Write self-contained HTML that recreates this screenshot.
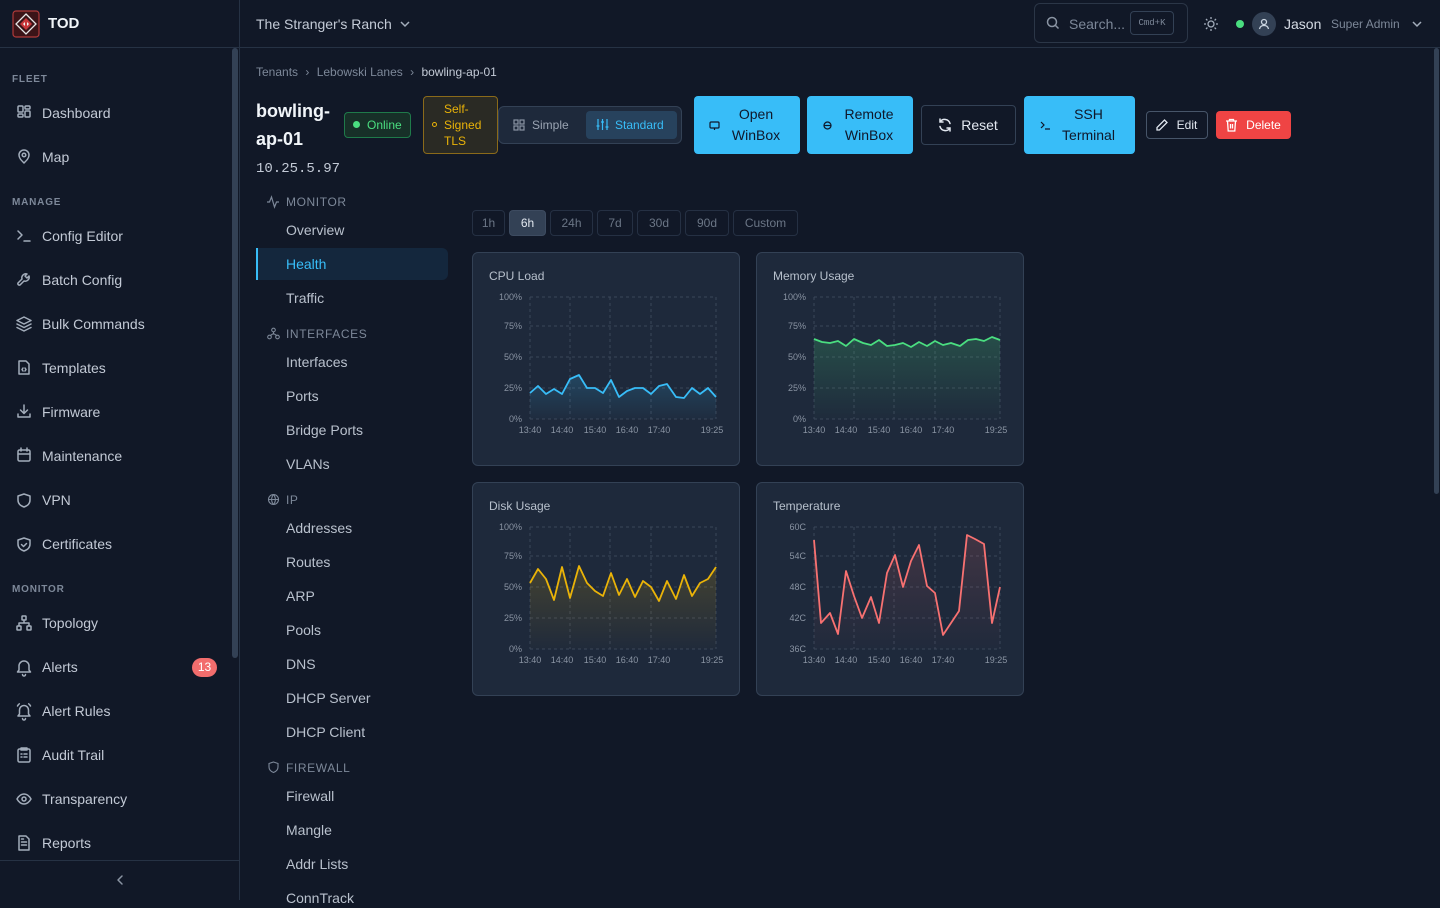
<!DOCTYPE html>
<html><head><meta charset="utf-8"><style>
*{box-sizing:border-box;margin:0;padding:0}
body{width:1440px;height:900px;overflow:hidden;background:#111827;font-family:"Liberation Sans",sans-serif;color:#cbd5e1;position:relative}
.a{position:absolute;white-space:nowrap}
.t{line-height:20px;font-size:14px;color:#c3cad6}
.sec{font-size:10px;font-weight:bold;letter-spacing:.8px;color:#7d8899;line-height:12px}
.sub{font-size:14px;color:#b9c1cd;line-height:20px}
.subh{font-size:12px;letter-spacing:.6px;color:#7d8899;line-height:14px}
.btn{position:absolute;border-radius:4px;font-size:14px;display:flex;align-items:center;justify-content:center;text-align:center;line-height:21px}
.blue{background:#38bdf8;color:#0f172a}
.card{position:absolute;width:268px;height:214px;background:#1e293b;border:1px solid #334155;border-radius:6px}
.card .ttl{position:absolute;left:16px;top:16px;font-size:12px;color:#b7c0cc}
.card svg{position:absolute;left:0;top:0}
.tr{position:absolute;top:210px;height:26px;border:1px solid #253043;border-radius:4px;font-size:12px;color:#6b7686;line-height:24px;text-align:center}
</style></head><body>

<div class="a" style="left:0;top:0;width:240px;height:900px;border-right:1px solid #263244;background:#111827"></div>
<div class="a" style="left:0;top:47px;width:1440px;height:1px;background:#263244"></div>
<div class="a" style="left:232px;top:48px;width:6px;height:610px;background:#334155;border-radius:3px"></div>
<div class="a" style="left:1434px;top:48px;width:5px;height:446px;background:#334155;border-radius:3px"></div>
<svg class="a" style="left:12px;top:10px" width="28" height="28" viewBox="0 0 28 28"><rect x="1" y="1" width="26" height="26" rx="3" fill="#3b1418" stroke="#b03a3a" stroke-width="1.2"/><path d="M14 4 L24 14 L14 24 L4 14Z" fill="none" stroke="#e6e6e6" stroke-width="1.3"/><path d="M14 8 L20 14 L14 20 L8 14Z" fill="#c8363a"/><path d="M11 14 L13 12 L13 16Z M17 14 L15 12 L15 16Z" fill="#f2f2f2"/></svg>
<div class="a" style="left:48px;top:15px;font-size:15px;font-weight:bold;color:#f1f5f9;line-height:18px">TOD</div>

<div class="a sec" style="left:12px;top:74px">FLEET</div>
<div class="a sec" style="left:12px;top:197px">MANAGE</div>
<div class="a sec" style="left:12px;top:584px">MONITOR</div>

<svg class="a" width="240" height="900" style="left:0;top:0" fill="none" stroke="#a3adbb" stroke-width="1.5" stroke-linecap="round" stroke-linejoin="round">
<rect x="18" y="106" width="5" height="6" rx="1"/><rect x="25" y="106" width="5" height="3" rx="1"/><rect x="18" y="114" width="5" height="3" rx="1"/><rect x="25" y="111" width="5" height="6" rx="1"/>
<path d="M24 163c3-3 5-5 5-8a5 5 0 0 0-10 0c0 3 2 5 5 8z"/><circle cx="24" cy="155" r="1.8"/>
<path d="M18 231l4 4-4 4M24 241h6"/>
<path d="M27 274a4 4 0 0 0-5 5l-4 4a1.5 1.5 0 0 0 2 2l4-4a4 4 0 0 0 5-5l-2 2-2-2 2-2z"/>
<path d="M24 317l7 3.5-7 3.5-7-3.5z M17 324l7 3.5 7-3.5 M17 327.5l7 3.5 7-3.5"/>
<path d="M19 361h7l3 3v10h-10z M23 368l-1 1.5 1 1.5 M25 368l1 1.5-1 1.5"/>
<path d="M24 405v8 M20.5 410l3.5 3.5 3.5-3.5 M18 414v3h12v-3"/>
<rect x="18" y="450" width="12" height="11" rx="1.5"/><path d="M18 454h12M21 448v3M27 448v3"/>
<path d="M24 494l6 2v4c0 4-3 6-6 7-3-1-6-3-6-7v-4z"/>
<path d="M24 538l6 2v4c0 4-3 6-6 7-3-1-6-3-6-7v-4z M21.5 544.5l2 2 3-3"/>
<rect x="22" y="616" width="4" height="4" rx=".5"/><rect x="17" y="626" width="4" height="4" rx=".5"/><rect x="27" y="626" width="4" height="4" rx=".5"/><path d="M24 620v3M19 626v-3h10v3"/>
<path d="M19 670v-4a5 5 0 0 1 10 0v4l1.5 2h-13z M22.5 674.5a1.5 1.5 0 0 0 3 0"/>
<path d="M19.5 714v-4a4.5 4.5 0 0 1 9 0v4l1.5 2h-12z M22.5 718.5a1.5 1.5 0 0 0 3 0 M17.5 706c.5-1 1-1.6 1.8-2.2 M30.5 706c-.5-1-1-1.6-1.8-2.2"/>
<rect x="18" y="749" width="12" height="13" rx="1.5"/><path d="M21 748h6v2h-6z M21 754h1M24 754h3M21 757h1M24 757h3"/>
<path d="M17 799c2-3.5 4.5-5 7-5s5 1.5 7 5c-2 3.5-4.5 5-7 5s-5-1.5-7-5z"/><circle cx="24" cy="799" r="2"/>
<path d="M19 836h7l3 3v11h-10z M21.5 842h5M21.5 845h5M21.5 839h2"/>
<path d="M122 876l-4 4 4 4" stroke="#8a94a3"/>
</svg>

<div class="a t" style="left:42px;top:103px">Dashboard</div>
<div class="a t" style="left:42px;top:147px">Map</div>
<div class="a t" style="left:42px;top:226px">Config Editor</div>
<div class="a t" style="left:42px;top:270px">Batch Config</div>
<div class="a t" style="left:42px;top:314px">Bulk Commands</div>
<div class="a t" style="left:42px;top:358px">Templates</div>
<div class="a t" style="left:42px;top:402px">Firmware</div>
<div class="a t" style="left:42px;top:446px">Maintenance</div>
<div class="a t" style="left:42px;top:490px">VPN</div>
<div class="a t" style="left:42px;top:534px">Certificates</div>
<div class="a t" style="left:42px;top:613px">Topology</div>
<div class="a t" style="left:42px;top:657px">Alerts</div>
<div class="a" style="left:192px;top:658px;width:25px;height:19px;border-radius:10px;background:#f26d6d;color:#fff;font-size:12px;line-height:19px;text-align:center">13</div>
<div class="a t" style="left:42px;top:701px">Alert Rules</div>
<div class="a t" style="left:42px;top:745px">Audit Trail</div>
<div class="a t" style="left:42px;top:789px">Transparency</div>
<div class="a t" style="left:42px;top:833px">Reports</div>
<div class="a" style="left:0;top:860px;width:240px;height:1px;background:#263244"></div>

<div class="a" style="left:256px;top:14px;font-size:14px;line-height:20px;color:#c3cad6">The Stranger's Ranch</div>
<svg class="a" style="left:399px;top:18px" width="12" height="12" fill="none" stroke="#a3adbb" stroke-width="1.5"><path d="M2 4l4 4 4-4"/></svg>
<div class="a" style="left:1034px;top:3px;width:154px;height:40px;border:1px solid #2b3647;border-radius:6px"></div>
<svg class="a" style="left:1046px;top:16px" width="14" height="14" fill="none" stroke="#8a94a3" stroke-width="1.5"><circle cx="6" cy="6" r="4.5"/><path d="M9.5 9.5l3 3"/></svg>
<div class="a" style="left:1069px;top:14px;font-size:14px;line-height:20px;color:#7d8899">Search...</div>
<div class="a" style="left:1130px;top:11px;width:44px;height:24px;border:1px solid #334155;border-radius:4px;font-size:9px;color:#7d8899;line-height:22px;text-align:center;font-family:'Liberation Mono',monospace">Cmd+K</div>
<svg class="a" style="left:1203px;top:16px" width="16" height="16" fill="none" stroke="#a3adbb" stroke-width="1.3"><circle cx="8" cy="8" r="3"/><path d="M8 1v2M8 13v2M1 8h2M13 8h2M3 3l1.4 1.4M11.6 11.6L13 13M3 13l1.4-1.4M11.6 4.4L13 3"/></svg>
<div class="a" style="left:1236px;top:20px;width:8px;height:8px;border-radius:50%;background:#4ade80"></div>
<div class="a" style="left:1252px;top:12px;width:24px;height:24px;border-radius:50%;background:#334155"></div>
<svg class="a" style="left:1256px;top:16px" width="16" height="16" fill="none" stroke="#cbd5e1" stroke-width="1.3"><circle cx="8" cy="6" r="2.5"/><path d="M3.5 13c.5-2.5 2.3-3.5 4.5-3.5s4 1 4.5 3.5"/></svg>
<div class="a" style="left:1284px;top:14px;font-size:14px;line-height:20px;color:#d5dbe4">Jason</div>
<div class="a" style="left:1331px;top:15px;font-size:12px;line-height:18px;color:#7d8899">Super Admin</div>
<svg class="a" style="left:1411px;top:18px" width="12" height="12" fill="none" stroke="#a3adbb" stroke-width="1.5"><path d="M2 4l4 4 4-4"/></svg>

<div class="a" style="left:256px;top:64px;font-size:12px;line-height:16px;color:#7d8899">Tenants <span style="margin:0 4px">›</span> Lebowski Lanes <span style="margin:0 4px">›</span> <span style="color:#c3cad6">bowling-ap-01</span></div>

<div class="a" style="left:256px;top:97px;font-size:18px;font-weight:bold;line-height:28px;color:#f1f5f9">bowling-<br>ap-01</div>
<div class="a" style="left:256px;top:160px;font-size:14px;font-family:'Liberation Mono',monospace;color:#c3cad6;line-height:18px">10.25.5.97</div>
<div class="a" style="left:344px;top:112px;width:67px;height:26px;border:1px solid #1f7a4a;background:#173028;border-radius:4px;color:#4ade80;font-size:12px;line-height:24px;padding-left:22px">Online</div>
<div class="a" style="left:353px;top:121px;width:7px;height:7px;border-radius:50%;background:#4ade80"></div>
<div class="a" style="left:423px;top:96px;width:75px;height:58px;border:1px solid #8a6a1a;background:#2a2a24;border-radius:4px;color:#eab308;font-size:12px;line-height:16px;padding:4px 0 0 20px;white-space:normal">Self-<br>Signed<br>TLS</div>
<div class="a" style="left:432px;top:122px;width:5px;height:5px;border:1px solid #eab308;border-radius:50%"></div>

<div class="a" style="left:498px;top:106px;width:184px;height:38px;border:1px solid #334155;background:#1e293b;border-radius:6px"></div>
<svg class="a" style="left:513px;top:119px" width="12" height="12" fill="none" stroke="#8a94a3" stroke-width="1.2"><rect x="1" y="1" width="4" height="4"/><rect x="7" y="1" width="4" height="4"/><rect x="1" y="7" width="4" height="4"/><rect x="7" y="7" width="4" height="4"/></svg>
<div class="a" style="left:532px;top:116px;font-size:12px;line-height:18px;color:#9aa4b2">Simple</div>
<div class="a" style="left:586px;top:111px;width:91px;height:28px;background:#27425d;border-radius:4px"></div>
<svg class="a" style="left:596px;top:118px" width="13" height="13" fill="none" stroke="#38bdf8" stroke-width="1.2"><path d="M2 1v11M6.5 1v11M11 1v11M0.5 8h3M5 4h3M9.5 9h3"/></svg>
<div class="a" style="left:615px;top:116px;font-size:12px;line-height:18px;color:#38bdf8">Standard</div>

<div class="btn blue" style="left:694px;top:96px;width:106px;height:58px;padding-left:18px">Open<br>WinBox</div>
<svg class="a" style="left:709px;top:120px" width="11" height="11" fill="none" stroke="#0f172a" stroke-width="1.2"><rect x="1" y="2" width="9" height="6" rx="1"/><path d="M5.5 8v2"/></svg>
<div class="btn blue" style="left:807px;top:96px;width:106px;height:58px;padding-left:18px">Remote<br>WinBox</div>
<svg class="a" style="left:822px;top:120px" width="11" height="11" fill="none" stroke="#0f172a" stroke-width="1.2"><circle cx="5.5" cy="5.5" r="3.5"/><path d="M2 5.5h7"/></svg>
<div class="btn" style="left:921px;top:105px;width:95px;height:40px;border:1px solid #334155;color:#e2e8f0;padding-left:22px">Reset</div>
<svg class="a" style="left:937px;top:117px" width="16" height="16" fill="none" stroke="#e2e8f0" stroke-width="1.5" stroke-linecap="round"><path d="M13 6.5A5.5 5.5 0 0 0 3 5M3 2v3h3M3 9.5A5.5 5.5 0 0 0 13 11M13 14v-3h-3"/></svg>
<div class="btn blue" style="left:1024px;top:96px;width:111px;height:58px;padding-left:18px">SSH<br>Terminal</div>
<svg class="a" style="left:1040px;top:120px" width="11" height="11" fill="none" stroke="#0f172a" stroke-width="1.2"><path d="M1 2l3 3-3 3M5 9h5"/></svg>
<div class="btn" style="left:1146px;top:111px;width:62px;height:28px;border:1px solid #475569;color:#e2e8f0;font-size:12px;padding-left:20px">Edit</div>
<svg class="a" style="left:1155px;top:118px" width="14" height="14" fill="none" stroke="#e2e8f0" stroke-width="1.3"><path d="M9.5 2l2.5 2.5-7.5 7.5H2v-2.5z"/></svg>
<div class="btn" style="left:1216px;top:111px;width:75px;height:28px;background:#ef4444;color:#fff;font-size:12px;padding-left:20px">Delete</div>
<svg class="a" style="left:1225px;top:118px" width="13" height="14" fill="none" stroke="#fff" stroke-width="1.3"><path d="M1 3h11M4.5 3V1.5h4V3M2.5 3l.7 10h6.6l.7-10M5.5 6v4.5M7.5 6v4.5"/></svg>

<svg class="a" style="left:266px;top:195px" width="14" height="14" fill="none" stroke="#7d8899" stroke-width="1.2"><path d="M1 7h2.5l2-5 3 10 2-5H13"/></svg>
<div class="a subh" style="left:286px;top:195px">MONITOR</div>
<div class="a sub" style="left:286px;top:220px">Overview</div>
<div class="a" style="left:256px;top:248px;width:192px;height:32px;background:#14273d;border-radius:0 6px 6px 0;border-left:2px solid #38bdf8"></div>
<div class="a sub" style="left:286px;top:254px;color:#38bdf8">Health</div>
<div class="a sub" style="left:286px;top:288px">Traffic</div>
<svg class="a" style="left:267px;top:327px" width="13" height="13" fill="none" stroke="#7d8899" stroke-width="1.1"><circle cx="6.5" cy="3" r="1.8"/><circle cx="2.5" cy="10" r="1.8"/><circle cx="10.5" cy="10" r="1.8"/><path d="M6.5 5v2M3.5 8.5l2-1.5h2l2 1.5"/></svg>
<div class="a subh" style="left:286px;top:327px">INTERFACES</div>
<div class="a sub" style="left:286px;top:352px">Interfaces</div>
<div class="a sub" style="left:286px;top:386px">Ports</div>
<div class="a sub" style="left:286px;top:420px">Bridge Ports</div>
<div class="a sub" style="left:286px;top:454px">VLANs</div>
<svg class="a" style="left:267px;top:493px" width="13" height="13" fill="none" stroke="#7d8899" stroke-width="1.1"><circle cx="6.5" cy="6.5" r="5"/><path d="M1.5 6.5h10M6.5 1.5c-2.5 3-2.5 7 0 10M6.5 1.5c2.5 3 2.5 7 0 10"/></svg>
<div class="a subh" style="left:286px;top:493px">IP</div>
<div class="a sub" style="left:286px;top:518px">Addresses</div>
<div class="a sub" style="left:286px;top:552px">Routes</div>
<div class="a sub" style="left:286px;top:586px">ARP</div>
<div class="a sub" style="left:286px;top:620px">Pools</div>
<div class="a sub" style="left:286px;top:654px">DNS</div>
<div class="a sub" style="left:286px;top:688px">DHCP Server</div>
<div class="a sub" style="left:286px;top:722px">DHCP Client</div>
<svg class="a" style="left:267px;top:761px" width="13" height="13" fill="none" stroke="#7d8899" stroke-width="1.1"><path d="M6.5 1l4.5 1.5v3.5c0 3-2 4.5-4.5 5.5C4 10.5 2 9 2 6V2.5z"/></svg>
<div class="a subh" style="left:286px;top:761px">FIREWALL</div>
<div class="a sub" style="left:286px;top:786px">Firewall</div>
<div class="a sub" style="left:286px;top:820px">Mangle</div>
<div class="a sub" style="left:286px;top:854px">Addr Lists</div>
<div class="a sub" style="left:286px;top:888px">ConnTrack</div>

<div class="tr" style="left:472px;width:33px">1h</div>
<div class="tr" style="left:509px;width:37px;background:#334155;border-color:#3d4b60;color:#e2e8f0">6h</div>
<div class="tr" style="left:550px;width:43px">24h</div>
<div class="tr" style="left:597px;width:36px">7d</div>
<div class="tr" style="left:637px;width:44px">30d</div>
<div class="tr" style="left:685px;width:44px">90d</div>
<div class="tr" style="left:733px;width:65px">Custom</div>

<div class="card" style="left:472px;top:252px"><div class="ttl">CPU Load</div>
<svg width="268" height="214" font-family="Liberation Sans" font-size="9" fill="#8a94a3">
<defs><linearGradient id="g1" x1="0" y1="0" x2="0" y2="1"><stop offset="0" stop-color="#38bdf8" stop-opacity=".2"/><stop offset="1" stop-color="#38bdf8" stop-opacity=".02"/></linearGradient></defs>
<g stroke="#3b4659" stroke-dasharray="3 3"><path d="M57 44H243M57 73H243M57 104H243M57 135H243M57 166H243M57 44V166M97 44V166M137 44V166M178 44V166M243 44V166"/></g>
<g text-anchor="end"><text x="49" y="47">100%</text><text x="49" y="76">75%</text><text x="49" y="107">50%</text><text x="49" y="138">25%</text><text x="49" y="169">0%</text></g>
<g text-anchor="middle"><text x="57" y="180">13:40</text><text x="89" y="180">14:40</text><text x="122" y="180">15:40</text><text x="154" y="180">16:40</text><text x="186" y="180">17:40</text><text x="239" y="180">19:25</text></g>
<polygon fill="url(#g1)" points="57,140 65,133 73,141 81,136 89,141 97,126 106,122 114,135 122,135 130,140 138,127 146,144 154,138 162,135 170,135 178,141 186,133 194,131 203,144 211,145 219,135 227,141 235,135 243,144 243,166 57,166"/>
<polyline fill="none" stroke="#38bdf8" stroke-width="1.8" stroke-linejoin="round" points="57,140 65,133 73,141 81,136 89,141 97,126 106,122 114,135 122,135 130,140 138,127 146,144 154,138 162,135 170,135 178,141 186,133 194,131 203,144 211,145 219,135 227,141 235,135 243,144"/>
</svg></div>

<div class="card" style="left:756px;top:252px"><div class="ttl">Memory Usage</div>
<svg width="268" height="214" font-family="Liberation Sans" font-size="9" fill="#8a94a3">
<defs><linearGradient id="g2" x1="0" y1="0" x2="0" y2="1"><stop offset="0" stop-color="#4ade80" stop-opacity=".2"/><stop offset="1" stop-color="#4ade80" stop-opacity=".01"/></linearGradient></defs>
<g stroke="#3b4659" stroke-dasharray="3 3"><path d="M57 44H243M57 73H243M57 104H243M57 135H243M57 166H243M57 44V166M97 44V166M137 44V166M178 44V166M243 44V166"/></g>
<g text-anchor="end"><text x="49" y="47">100%</text><text x="49" y="76">75%</text><text x="49" y="107">50%</text><text x="49" y="138">25%</text><text x="49" y="169">0%</text></g>
<g text-anchor="middle"><text x="57" y="180">13:40</text><text x="89" y="180">14:40</text><text x="122" y="180">15:40</text><text x="154" y="180">16:40</text><text x="186" y="180">17:40</text><text x="239" y="180">19:25</text></g>
<polygon fill="url(#g2)" points="57,86 65,89 73,90 81,88 89,93 97,86 106,90 114,92 122,87 130,93 138,92 146,90 154,94 162,89 170,93 178,88 186,92 194,90 203,93 211,87 219,86 227,88 235,84 243,87 243,166 57,166"/>
<polyline fill="none" stroke="#4ade80" stroke-width="1.8" stroke-linejoin="round" points="57,86 65,89 73,90 81,88 89,93 97,86 106,90 114,92 122,87 130,93 138,92 146,90 154,94 162,89 170,93 178,88 186,92 194,90 203,93 211,87 219,86 227,88 235,84 243,87"/>
</svg></div>

<div class="card" style="left:472px;top:482px"><div class="ttl">Disk Usage</div>
<svg width="268" height="214" font-family="Liberation Sans" font-size="9" fill="#8a94a3">
<defs><linearGradient id="g3" x1="0" y1="0" x2="0" y2="1"><stop offset="0" stop-color="#eab308" stop-opacity=".18"/><stop offset="1" stop-color="#eab308" stop-opacity=".01"/></linearGradient></defs>
<g stroke="#3b4659" stroke-dasharray="3 3"><path d="M57 44H243M57 73H243M57 104H243M57 135H243M57 166H243M57 44V166M97 44V166M137 44V166M178 44V166M243 44V166"/></g>
<g text-anchor="end"><text x="49" y="47">100%</text><text x="49" y="76">75%</text><text x="49" y="107">50%</text><text x="49" y="138">25%</text><text x="49" y="169">0%</text></g>
<g text-anchor="middle"><text x="57" y="180">13:40</text><text x="89" y="180">14:40</text><text x="122" y="180">15:40</text><text x="154" y="180">16:40</text><text x="186" y="180">17:40</text><text x="239" y="180">19:25</text></g>
<polygon fill="url(#g3)" points="57,100 65,86 73,96 81,117 89,84 97,115 106,83 114,100 122,108 130,113 138,90 146,112 154,96 162,114 170,98 178,104 186,118 194,98 203,116 211,92 219,113 227,100 235,96 243,84 243,166 57,166"/>
<polyline fill="none" stroke="#eab308" stroke-width="1.8" stroke-linejoin="round" points="57,100 65,86 73,96 81,117 89,84 97,115 106,83 114,100 122,108 130,113 138,90 146,112 154,96 162,114 170,98 178,104 186,118 194,98 203,116 211,92 219,113 227,100 235,96 243,84"/>
</svg></div>

<div class="card" style="left:756px;top:482px"><div class="ttl">Temperature</div>
<svg width="268" height="214" font-family="Liberation Sans" font-size="9" fill="#8a94a3">
<defs><linearGradient id="g4" x1="0" y1="0" x2="0" y2="1"><stop offset="0" stop-color="#f87171" stop-opacity=".16"/><stop offset="1" stop-color="#f87171" stop-opacity=".01"/></linearGradient></defs>
<g stroke="#3b4659" stroke-dasharray="3 3"><path d="M57 44H243M57 73H243M57 104H243M57 135H243M57 166H243M57 44V166M97 44V166M137 44V166M178 44V166M243 44V166"/></g>
<g text-anchor="end"><text x="49" y="47">60C</text><text x="49" y="76">54C</text><text x="49" y="107">48C</text><text x="49" y="138">42C</text><text x="49" y="169">36C</text></g>
<g text-anchor="middle"><text x="57" y="180">13:40</text><text x="89" y="180">14:40</text><text x="122" y="180">15:40</text><text x="154" y="180">16:40</text><text x="186" y="180">17:40</text><text x="239" y="180">19:25</text></g>
<polygon fill="url(#g4)" points="57,57 64,140 73,130 81,151 89,88 97,113 105,135 114,114 122,140 130,90 138,72 146,104 154,78 162,62 170,103 178,110 186,152 194,140 202,128 210,52 218,56 227,61 235,140 243,104 243,166 57,166"/>
<polyline fill="none" stroke="#f87171" stroke-width="1.8" stroke-linejoin="round" points="57,57 64,140 73,130 81,151 89,88 97,113 105,135 114,114 122,140 130,90 138,72 146,104 154,78 162,62 170,103 178,110 186,152 194,140 202,128 210,52 218,56 227,61 235,140 243,104"/>
</svg></div>

</body></html>
